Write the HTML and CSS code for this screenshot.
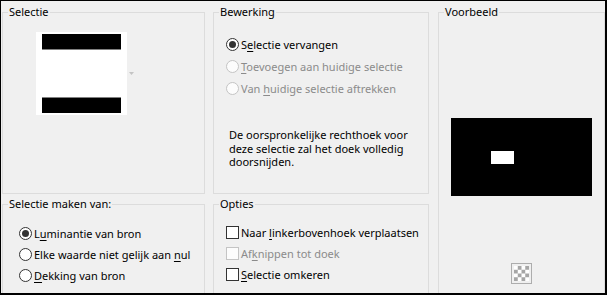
FILE: index.html
```html
<!DOCTYPE html>
<html lang="nl">
<head>
    <meta charset="UTF-8">
    <title>Selectie uit masker</title>
    <link rel="stylesheet" href="styles.css">
</head>
<body>
    <div class="dialog">
        <fieldset class="group">
            <legend>Selectie</legend>
            <div class="sel-preview">
                <div class="sel-thumb">
                    <div class="bar bar-top"></div>
                    <div class="bar bar-bottom"></div>
                </div>
                <svg class="drop-arrow" width="5" height="3" viewBox="0 0 5 3"><polygon points="0,0 5,0 2.5,3" fill="#c4c4c4"/></svg>
            </div>
        </fieldset>

        <fieldset class="group">
            <legend>Bewerking</legend>
            <ul class="options options-wide">
                <li class="opt"><span class="radio checked"></span><span>S<u>e</u>lectie vervangen</span></li>
                <li class="opt disabled"><span class="radio"></span><span><u>T</u>oevoegen aan huidige selectie</span></li>
                <li class="opt disabled"><span class="radio"></span><span>Van <u>h</u>uidige selectie aftrekken</span></li>
            </ul>
            <p class="note">De oorspronkelijke rechthoek voor<br>deze selectie zal het doek volledig<br>doorsnijden.</p>
        </fieldset>

        <fieldset class="group group-voorbeeld">
            <legend>Voorbeeld</legend>
            <div class="preview">
                <div class="preview-spot"></div>
            </div>
            <div class="checker-btn"><span class="checker"></span></div>
        </fieldset>

        <fieldset class="group">
            <legend>Selectie maken van:</legend>
            <ul class="options options-left">
                <li class="opt"><span class="radio checked"></span><span>L<u>u</u>minantie van bron</span></li>
                <li class="opt"><span class="radio"></span><span>Elke waarde niet gelijk aan <u>n</u>ul</span></li>
                <li class="opt"><span class="radio"></span><span><u>D</u>ekking van bron</span></li>
            </ul>
        </fieldset>

        <fieldset class="group">
            <legend>Opties</legend>
            <ul class="options options-check">
                <li class="opt"><span class="check"></span><span>Naar <u>l</u>inkerbovenhoek verplaatsen</span></li>
                <li class="opt disabled"><span class="check"></span><span>Af<u>k</u>nippen tot doek</span></li>
                <li class="opt"><span class="check"></span><span><u>S</u>electie omkeren</span></li>
            </ul>
        </fieldset>
    </div>
</body>
</html>
```

FILE: styles.css
```css
body {
    margin: 0;
    font-family: "Noto Sans", "Liberation Sans", sans-serif;
    font-size: 11px;
    color: #000;
}
.dialog {
    width: 607px;
    height: 295px;
    box-sizing: border-box;
    border-style: solid;
    border-color: #000;
    border-width: 1px 2px 2px 1px;
    background-color: #f0f0f0;
    padding: 3px 0 0 1px;
    display: grid;
    grid-template-columns: 203px 216px 168px;
    grid-template-rows: 190px 110px;
    column-gap: 8px;
    row-gap: 2px;
    overflow: hidden;
}
.group {
    margin: 0;
    padding: 0;
    border: 1px solid #dcdcdc;
    min-width: 0;
}
.group legend {
    margin-left: 5px;
    padding: 0 1px;
    line-height: 16px;
}
.group-voorbeeld {
    grid-column: 3;
    grid-row: 1 / 3;
    margin-left: 1px;
}

/* Selectie */
.sel-preview {
    display: flex;
    align-items: center;
    margin: 12px 0 0 33px;
}
.sel-thumb {
    width: 91px;
    height: 83px;
    box-sizing: border-box;
    padding: 2px 6px;
    background-color: #fff;
    display: flex;
    flex-direction: column;
    justify-content: space-between;
}
.bar {
    height: 15px;
    background-color: #000;
}
.bar-top {
    border-bottom: 1px solid #808080;
}
.bar-bottom {
    border-top: 1px solid #808080;
}
.drop-arrow {
    margin-left: 2px;
}

/* opties en keuzerondjes */
.options {
    list-style: none;
    margin: 0;
    padding: 0;
}
.opt {
    display: flex;
    align-items: center;
}
.opt u {
    text-underline-offset: 2px;
}
.options-wide {
    margin-top: 13px;
    padding-left: 12px;
}
.options-wide .opt {
    height: 22px;
}
.options-left {
    margin-top: 11px;
    padding-left: 16px;
}
.options-check {
    margin-top: 10px;
    padding-left: 12px;
}
.options-left .opt,
.options-check .opt {
    height: 21px;
}
.radio,
.check {
    width: 13px;
    height: 13px;
    box-sizing: border-box;
    border: 1px solid #333;
    background-color: #fff;
    margin-right: 2px;
    flex-shrink: 0;
    display: flex;
    align-items: center;
    justify-content: center;
}
.radio {
    border-radius: 50%;
}
.radio.checked::after {
    content: "";
    width: 7px;
    height: 7px;
    border-radius: 50%;
    background-color: #333;
}
.disabled {
    color: #8b8b8b;
}
.disabled .radio,
.disabled .check {
    border-color: #c4c4c4;
    background-color: #fcfcfc;
}
.note {
    margin: 29px 0 0 15px;
    line-height: 13.5px;
}

/* Voorbeeld */
.preview {
    width: 141px;
    height: 78px;
    margin: 98px 0 0 12px;
    background-color: #000;
    padding: 33px 0 0 40px;
    box-sizing: border-box;
}
.preview-spot {
    width: 23px;
    height: 13px;
    background-color: #fff;
}
.checker-btn {
    width: 21px;
    height: 21px;
    box-sizing: border-box;
    margin: 67px auto 0;
    border: 1px solid #adadad;
    padding: 2px;
    background-color: #f0f0f0;
}
.checker {
    display: block;
    width: 15px;
    height: 15px;
    background-color: #fff;
    background-image: conic-gradient(#a6a6a6 0 25%, transparent 0 50%, #a6a6a6 0 75%, transparent 0);
    background-size: 7.5px 7.5px;
}
```
